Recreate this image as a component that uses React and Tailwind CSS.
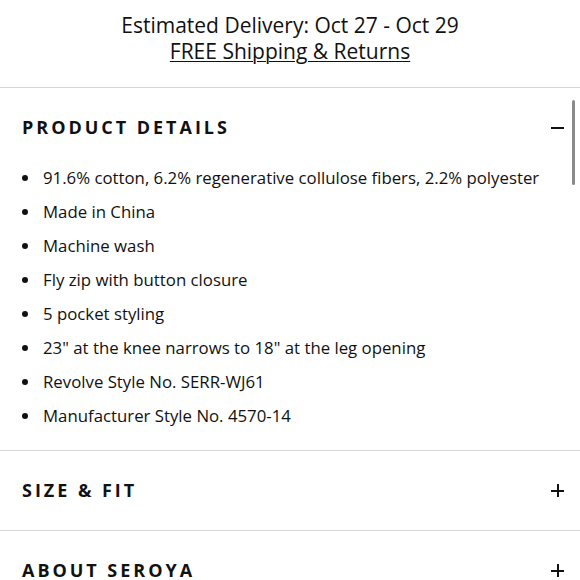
const details = [
  '91.6% cotton, 6.2% regenerative collulose fibers, 2.2% polyester',
  'Made in China',
  'Machine wash',
  'Fly zip with button closure',
  '5 pocket styling',
  '23" at the knee narrows to 18" at the leg opening',
  'Revolve Style No. SERR-WJ61',
  'Manufacturer Style No. 4570-14',
];

function Section({ title, open, children }) {
  return (
    <div className="border-t border-[#d6d6d6]">
      <div className="flex items-center justify-between pl-[22px] pr-[16px] h-[79px]">
        <h2 className="text-[18px] font-bold tracking-[0.165em] text-[#111]">{title}</h2>
        <span className="relative w-[13px] h-[13px] flex items-center justify-center">
          <span className="absolute w-[13px] h-[2px] bg-[#111]" />
          {!open && <span className="absolute w-[2px] h-[13px] bg-[#111]" />}
        </span>
      </div>
      {children}
    </div>
  );
}

export default function App() {
  return (
    <div className="relative w-[580px] h-[580px] overflow-hidden bg-white text-[#111]" style={{ fontFamily: '"Open Sans", "Liberation Sans", sans-serif' }}>
      <div className="h-[87px] flex flex-col items-center pt-[12px] text-[21px] leading-[26px]">
        <p>Estimated Delivery: Oct 27 - Oct 29</p>
        <a className="underline underline-offset-2 decoration-1">FREE Shipping &amp; Returns</a>
      </div>

      <Section title="PRODUCT DETAILS" open>
        <ul className="pl-[22px] pb-[17px] -mt-[6px]">
          {details.map((d) => (
            <li key={d} className="flex items-center h-[34px] text-[16.8px]">
              <span className="w-[21px] flex items-center">
                <span className="w-[6px] h-[6px] rounded-full bg-[#111]" />
              </span>
              <span>{d}</span>
            </li>
          ))}
        </ul>
      </Section>

      <Section title="SIZE &amp; FIT" />
      <Section title="ABOUT SEROYA" />

      <div className="absolute right-[5px] top-[100px] w-[3px] h-[85px] rounded-full bg-[#8a8a8a]" />
    </div>
  );
}
